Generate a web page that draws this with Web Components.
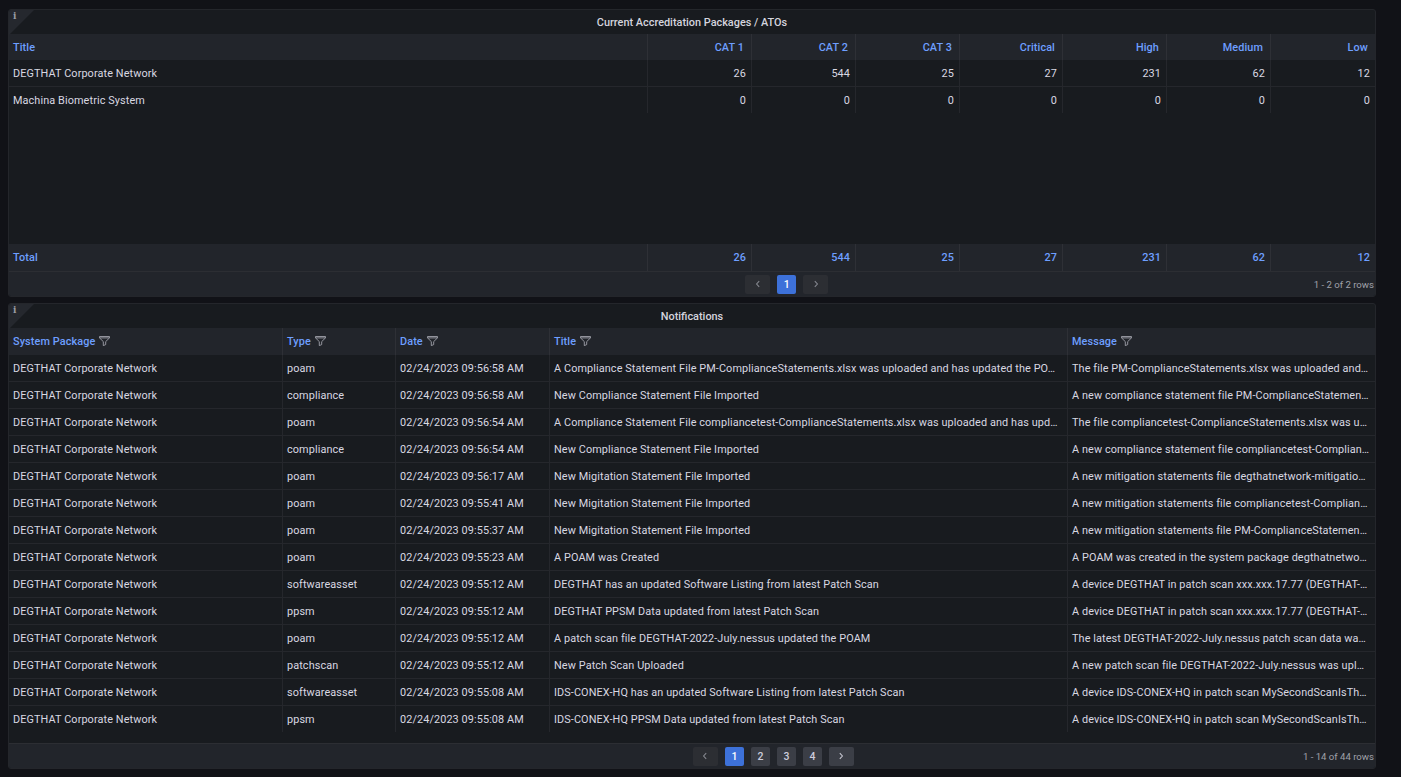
<!DOCTYPE html>
<html lang="en"><head><meta charset="utf-8"><title>Dashboard</title>
<style>
html,body{margin:0;height:100%;background:#111217;overflow:hidden}
body{font-family:Roboto,"Liberation Sans",sans-serif;font-size:11px;color:#ccccdc}
</style></head><body>
<dash-page>
  <dash-panel heading="Current Accreditation Packages / ATOs" style="height:288px">
    <data-table id="t1"></data-table>
    <table-pager pages="1" status="1 - 2 of 2 rows" style="padding-left:251px"></table-pager>
  </dash-panel>
  <dash-panel heading="Notifications" style="height:466px">
    <data-table id="t2"></data-table>
    <table-pager pages="4" status="1 - 14 of 44 rows" style="padding-left:235px"></table-pager>
  </dash-panel>
</dash-page>
<script>
class DashPage extends HTMLElement{constructor(){super();this.attachShadow({mode:'open'}).innerHTML=`<style>
:host{display:flex;flex-direction:column;gap:6px;padding:9px 25px 0 8px;box-sizing:border-box;width:100%}
::slotted(*){flex:none}
</style><slot></slot>`}}
class DashPanel extends HTMLElement{constructor(){super();this.attachShadow({mode:'open'}).innerHTML=`<style>
:host{display:flex;flex-direction:column;position:relative;background:#181b1f;border:1px solid #24262b;border-radius:3px;box-sizing:border-box;overflow:hidden}
header{height:24px;flex:none;display:flex;align-items:center;justify-content:center;font-weight:500;font-size:10.9px;color:#d4d4de;box-sizing:border-box}
.corner{position:absolute;left:0;top:0;width:0;height:0;border-style:solid;border-width:25px 25px 0 0;border-color:#25282e transparent transparent transparent}
.i{position:absolute;left:4px;top:1px;font:bold 9px "DejaVu Serif",serif;color:#9a9ca5;line-height:11px}
main{flex:1;display:flex;flex-direction:column;min-height:0}
</style><span class="corner"></span><span class="i">i</span><header></header><main><slot></slot></main>`;
this.shadowRoot.querySelector('header').textContent=this.getAttribute('heading')}}
const FILTER=`<svg viewBox="0 0 11 10" width="11" height="10" fill="none" stroke="#a0a2aa" stroke-width=".9" stroke-linejoin="round" aria-hidden="true"><path d="M.5.5h10v1.4L6.7 5.6v3L4.3 9.6v-4L.5 1.9zM.5 1.9h10"/></svg>`;
class DataTable extends HTMLElement{constructor(){super();this.attachShadow({mode:'open'})}
set config(c){const esc=s=>String(s).replace(/&/g,'&amp;');
const cell=(t,i,x)=>`<div class="c ${c.right&&i>0?'r':''} ${x}">${esc(t)}${x=='h'&&c.filter?FILTER:''}</div>`;
const row=(r,k,x)=>`<div class="row ${k}">${r.map((t,i)=>cell(t,i,x)).join('')}</div>`;
this.shadowRoot.innerHTML=`<style>
:host{display:flex;flex-direction:column;flex:1;min-height:0;font-size:10.85px;letter-spacing:.01em}
.row{display:grid;grid-template-columns:${c.cols};height:27px;flex:none;box-sizing:border-box;border-bottom:1px solid #25272c}
.row:last-child{border-bottom-color:transparent}
.head{height:${c.filter?27:26}px;background:#22252b;border-bottom:0;font-weight:500}
.foot{background:#22252b;border-bottom:0;font-weight:500}
.body{flex:1;display:flex;flex-direction:column;min-height:0}
.c{padding:0 5px 0 4px;display:flex;align-items:center;gap:4px;white-space:nowrap;overflow:hidden;border-left:1px solid #25272c;min-width:0;color:#d8d8e2}
.c:first-child{border-left:0}
.r{justify-content:flex-end}
.h,.f{color:#6e9fff;border-left-color:#2e3036}
.h{padding-bottom:${c.filter?1:0}px}
.h.r{padding-right:7px}
svg{flex:none}
</style>${row(c.head,'head','h')}<div class="body">${c.rows.map(r=>row(r,'','')).join('')}</div>${c.foot?row(c.foot,'foot','f'):''}`}}
const CHEV=d=>`<svg viewBox="0 0 8 10" width="8" height="10" fill="none" stroke="currentColor" stroke-width="1.1" aria-hidden="true"><path d="${d}"/></svg>`;
class TablePager extends HTMLElement{constructor(){super();const n=+this.getAttribute('pages');let b='';
for(let i=1;i<=n;i++)b+=`<span class="b n ${i==1?'on':''}">${i}</span>`;
const many=n>1;
this.attachShadow({mode:'open'}).innerHTML=`<style>
:host{flex:none;height:25px;display:flex;align-items:center;background:#22252b;border-top:1px solid #2c2e33;box-sizing:border-box;padding-right:1px}
.list{flex:1;display:flex;align-items:center;justify-content:center;gap:7px}
.b{height:19px;display:flex;align-items:center;justify-content:center;border-radius:2px;font-weight:500;font-size:10.5px;color:#ccccdc}
.n{width:19px;background:#3b3e46}
.on{background:#3d71d9;color:#fff}
.a{width:25px;background:#2c2e33;color:#85878f}
.a.next{${many?'background:#3b3e46;color:#c4c5cf':''}}
.st{flex:none;color:#a0a2aa;font-size:9.6px}
</style><div class="list"><span class="b a">${CHEV('M5.2 2.2L2.6 5l2.6 2.8')}</span>${b}<span class="b a next">${CHEV('M2.8 2.2L5.4 5 2.8 7.8')}</span></div><span class="st">${this.getAttribute('status')}</span>`}}
customElements.define('dash-page',DashPage);
customElements.define('dash-panel',DashPanel);
customElements.define('data-table',DataTable);
customElements.define('table-pager',TablePager);
const N='DEGTHAT Corporate Network';
document.getElementById('t1').config={right:true,cols:'638px 104px 104px 104px 103px 104px 104px 1fr',
 head:['Title','CAT 1','CAT 2','CAT 3','Critical','High','Medium','Low'],
 rows:[[N,26,544,25,27,231,62,12],['Machina Biometric System',0,0,0,0,0,0,0]],
 foot:['Total',26,544,25,27,231,62,12]};
document.getElementById('t2').config={filter:true,cols:'273px 113px 154px 518px 1fr',
 head:['System Package','Type','Date','Title','Message'],
 rows:[
 [N,'poam','02/24/2023 09:56:58 AM','A Compliance Statement File PM-ComplianceStatements.xlsx was uploaded and has updated the PO…','The file PM-ComplianceStatements.xlsx was uploaded and…'],
 [N,'compliance','02/24/2023 09:56:58 AM','New Compliance Statement File Imported','A new compliance statement file PM-ComplianceStatemen…'],
 [N,'poam','02/24/2023 09:56:54 AM','A Compliance Statement File compliancetest-ComplianceStatements.xlsx was uploaded and has upd…','The file compliancetest-ComplianceStatements.xlsx was u…'],
 [N,'compliance','02/24/2023 09:56:54 AM','New Compliance Statement File Imported','A new compliance statement file compliancetest-Complian…'],
 [N,'poam','02/24/2023 09:56:17 AM','New Migitation Statement File Imported','A new mitigation statements file degthatnetwork-mitigatio…'],
 [N,'poam','02/24/2023 09:55:41 AM','New Migitation Statement File Imported','A new mitigation statements file compliancetest-Complian…'],
 [N,'poam','02/24/2023 09:55:37 AM','New Migitation Statement File Imported','A new mitigation statements file PM-ComplianceStatemen…'],
 [N,'poam','02/24/2023 09:55:23 AM','A POAM was Created','A POAM was created in the system package degthatnetwo…'],
 [N,'softwareasset','02/24/2023 09:55:12 AM','DEGTHAT has an updated Software Listing from latest Patch Scan','A device DEGTHAT in patch scan xxx.xxx.17.77 (DEGTHAT-…'],
 [N,'ppsm','02/24/2023 09:55:12 AM','DEGTHAT PPSM Data updated from latest Patch Scan','A device DEGTHAT in patch scan xxx.xxx.17.77 (DEGTHAT-…'],
 [N,'poam','02/24/2023 09:55:12 AM','A patch scan file DEGTHAT-2022-July.nessus updated the POAM','The latest DEGTHAT-2022-July.nessus patch scan data wa…'],
 [N,'patchscan','02/24/2023 09:55:12 AM','New Patch Scan Uploaded','A new patch scan file DEGTHAT-2022-July.nessus was upl…'],
 [N,'softwareasset','02/24/2023 09:55:08 AM','IDS-CONEX-HQ has an updated Software Listing from latest Patch Scan','A device IDS-CONEX-HQ in patch scan MySecondScanIsTh…'],
 [N,'ppsm','02/24/2023 09:55:08 AM','IDS-CONEX-HQ PPSM Data updated from latest Patch Scan','A device IDS-CONEX-HQ in patch scan MySecondScanIsTh…']
 ]};
</script></body></html>
